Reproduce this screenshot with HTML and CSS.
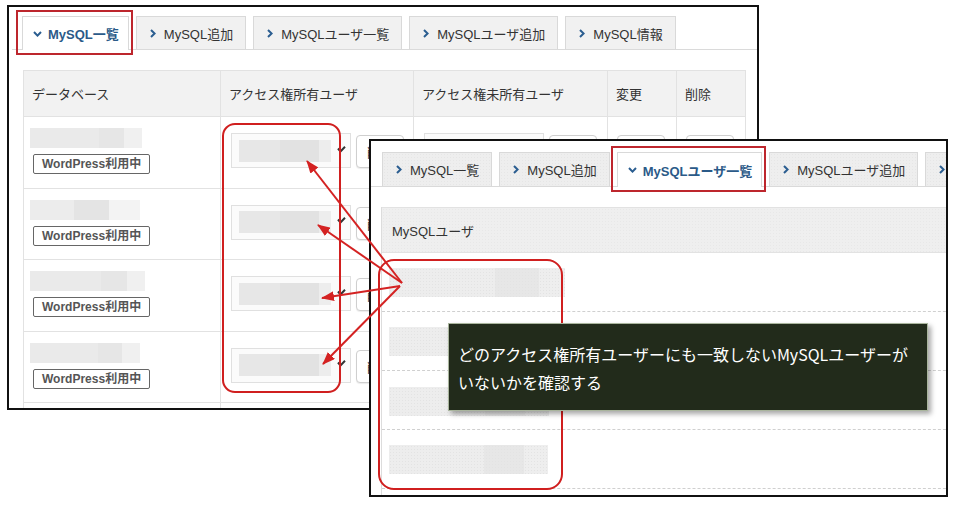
FILE: index.html
```html
<!DOCTYPE html>
<html lang="ja">
<head>
<meta charset="utf-8">
<title>MySQL一覧</title>
<link rel="stylesheet" href="styles.css">
</head>
<body>
<div class="stage">

  <section class="win win-main">
    <nav class="tabs">
      <div class="tab is-active is-marked"><svg class="chev-down" viewBox="0 0 9 6"><polyline points="1,1 4.5,4.6 8,1"/></svg><span>MySQL一覧</span></div>
      <div class="tab"><svg class="chev" viewBox="0 0 6 9"><polyline points="1,1 4.6,4.5 1,8"/></svg><span>MySQL追加</span></div>
      <div class="tab"><svg class="chev" viewBox="0 0 6 9"><polyline points="1,1 4.6,4.5 1,8"/></svg><span>MySQLユーザ一覧</span></div>
      <div class="tab"><svg class="chev" viewBox="0 0 6 9"><polyline points="1,1 4.6,4.5 1,8"/></svg><span>MySQLユーザ追加</span></div>
      <div class="tab"><svg class="chev" viewBox="0 0 6 9"><polyline points="1,1 4.6,4.5 1,8"/></svg><span>MySQL情報</span></div>
    </nav>

    <div class="dbtable">
      <div class="dbrow dbhead">
        <div class="cell">データベース</div>
        <div class="cell">アクセス権所有ユーザ</div>
        <div class="cell">アクセス権未所有ユーザ</div>
        <div class="cell">変更</div>
        <div class="cell">削除</div>
      </div>

      <div class="dbrow">
        <div class="cell c-db"><div class="blur w112"></div><span class="badge">WordPress利用中</span></div>
        <div class="cell c-own"><div class="select"><div class="blur-in"></div><svg class="sel-chev" viewBox="0 0 9 7"><polyline points="1,2.5 3.5,5.5 8,0.8"/></svg></div><span class="btn">削除</span></div>
        <div class="cell c-own"><div class="select plain"></div><span class="btn"></span></div>
        <div class="cell c-btn"><span class="btn"></span></div>
        <div class="cell c-btn"><span class="btn"></span></div>
      </div>

      <div class="dbrow">
        <div class="cell c-db"><div class="blur w110 s1"></div><span class="badge">WordPress利用中</span></div>
        <div class="cell c-own"><div class="select"><div class="blur-in"></div><svg class="sel-chev" viewBox="0 0 9 7"><polyline points="1,2.5 3.5,5.5 8,0.8"/></svg></div><span class="btn">削除</span></div>
        <div class="cell"></div>
        <div class="cell"></div>
        <div class="cell"></div>
      </div>

      <div class="dbrow">
        <div class="cell c-db"><div class="blur w115"></div><span class="badge">WordPress利用中</span></div>
        <div class="cell c-own"><div class="select"><div class="blur-in"></div><svg class="sel-chev" viewBox="0 0 9 7"><polyline points="1,2.5 3.5,5.5 8,0.8"/></svg></div><span class="btn">削除</span></div>
        <div class="cell"></div>
        <div class="cell"></div>
        <div class="cell"></div>
      </div>

      <div class="dbrow">
        <div class="cell c-db"><div class="blur w110"></div><span class="badge">WordPress利用中</span></div>
        <div class="cell c-own"><div class="select"><div class="blur-in"></div><svg class="sel-chev" viewBox="0 0 9 7"><polyline points="1,2.5 3.5,5.5 8,0.8"/></svg></div><span class="btn">削除</span></div>
        <div class="cell"></div>
        <div class="cell"></div>
        <div class="cell"></div>
      </div>

      <div class="dbrow">
        <div class="cell"></div><div class="cell"></div><div class="cell"></div><div class="cell"></div><div class="cell"></div>
      </div>
    </div>
  </section>

  <div class="mark mark-owners"></div>

  <section class="win win-users">
    <nav class="tabs">
      <div class="tab tex"><svg class="chev" viewBox="0 0 6 9"><polyline points="1,1 4.6,4.5 1,8"/></svg><span>MySQL一覧</span></div>
      <div class="tab tex"><svg class="chev" viewBox="0 0 6 9"><polyline points="1,1 4.6,4.5 1,8"/></svg><span>MySQL追加</span></div>
      <div class="tab is-active is-marked"><svg class="chev-down" viewBox="0 0 9 6"><polyline points="1,1 4.5,4.6 8,1"/></svg><span>MySQLユーザ一覧</span></div>
      <div class="tab tex"><svg class="chev" viewBox="0 0 6 9"><polyline points="1,1 4.6,4.5 1,8"/></svg><span>MySQLユーザ追加</span></div>
      <div class="tab tex"><svg class="chev" viewBox="0 0 6 9"><polyline points="1,1 4.6,4.5 1,8"/></svg><span>MySQL情報</span></div>
    </nav>

    <div class="usertable">
      <div class="userhead">MySQLユーザ</div>
      <div class="userrow"><div class="ublur u176"></div></div>
      <div class="userrow"><div class="ublur u160"></div></div>
      <div class="userrow r3"><div class="ublur u160"></div></div>
      <div class="userrow"><div class="ublur u159"></div></div>
      <div class="userrow"></div>
    </div>
  </section>

  <div class="mark mark-users"></div>

  <svg class="arrows" viewBox="0 0 957 507">
    <defs>
      <marker id="head" markerUnits="userSpaceOnUse" markerWidth="13" markerHeight="10" refX="12" refY="5" orient="auto">
        <path d="M0,0 L13,5 L0,10 Z" fill="#d42222"/>
      </marker>
    </defs>
    <line x1="402" y1="283" x2="307" y2="161" marker-end="url(#head)"/>
    <line x1="402" y1="283" x2="318" y2="225" marker-end="url(#head)"/>
    <line x1="400" y1="286" x2="322" y2="298" marker-end="url(#head)"/>
    <line x1="400" y1="286" x2="323" y2="364" marker-end="url(#head)"/>
  </svg>

  <div class="tooltip">
    <p>どのアクセス権所有ユーザーにも一致しないMySQLユーザーが</p>
    <p>いないかを確認する</p>
  </div>

</div>
</body>
</html>
```

FILE: styles.css
```css
* { box-sizing: border-box; }

body {
  margin: 0;
  background: #fff;
  font-family: "Liberation Sans", "Noto Sans CJK JP", sans-serif;
  color: #333;
}

.stage {
  position: relative;
  width: 957px;
  height: 507px;
  overflow: hidden;
  background: #fff;
}

/* windows */
.win {
  position: absolute;
  background: #fff;
  border: 2px solid #111;
  overflow: hidden;
}
.win-main { left: 7px; top: 5px; width: 752px; height: 405px; }
.win-users { left: 369px; top: 139px; width: 579px; height: 358px; }

/* tabs */
.tabs {
  display: flex;
  align-items: flex-end;
  gap: 7px;
  border-bottom: 1px solid #dadada;
}
.win-main .tabs { margin: 9px 0 0 3px; padding-left: 10px; height: 34px; }
.win-users .tabs { margin-top: 11px; padding-left: 11px; height: 35px; }

.tab {
  position: relative;
  flex: none;
  display: flex;
  align-items: center;
  gap: 8px;
  padding: 0 12px 0 13px;
  border: 1px solid #d9d9d9;
  border-bottom: 0;
  background: #f1f1f1;
  font-size: 13px;
  color: #333;
  white-space: nowrap;
}
.win-main .tab { height: 33px; }
.win-users .tab { height: 34px; }
.tab.tex {
  background-color: #eeeeee;
  background-image: radial-gradient(#e6e6e6 0.6px, transparent 0.8px);
  background-size: 3px 3px;
}
.tab.is-active {
  background: #fff;
  color: #2b5a88;
  font-weight: bold;
  margin-bottom: -1px;
  gap: 6px;
  padding: 0 9px 0 10px;
}
.win-main .tab.is-active { height: 34px; }
.win-users .tab.is-active { height: 35px; }
.is-marked::after {
  content: "";
  position: absolute;
  left: -7px;
  right: -5px;
  top: -7px;
  bottom: -5px;
  border: 2px solid #bd262d;
}

.chev { width: 6px; height: 9px; }
.chev-down { width: 9px; height: 6px; }
.chev polyline, .chev-down polyline {
  fill: none;
  stroke: #2a5d90;
  stroke-width: 2;
}

/* database table */
.dbtable {
  margin: 20px 0 0 14px;
  width: 723px;
  border-left: 1px solid #e2e2e2;
  border-top: 1px solid #e2e2e2;
}
.dbrow {
  display: grid;
  grid-template-columns: 197px 193px 194px 69px 69px;
  height: 71.5px;
}
.dbhead { height: 46px; background: #f2f2f2; }
.cell {
  border-right: 1px solid #e2e2e2;
  border-bottom: 1px solid #e2e2e2;
  min-width: 0;
}
.dbhead .cell {
  display: flex;
  align-items: center;
  padding-left: 8px;
  font-size: 13px;
  color: #333;
}

.c-db {
  display: flex;
  flex-direction: column;
  align-items: flex-start;
  padding: 11px 0 0 6px;
}
.blur {
  height: 20px;
  background: linear-gradient(90deg, #eaeaea 0 62%, #e6e6e6 62% 84%, #f0f0f0 84%);
}
.blur.s1 { background: linear-gradient(90deg, #ececec 0 40%, #e4e4e4 40% 72%, #f3f3f3 72%); }
.w110 { width: 110px; }
.w112 { width: 112px; }
.w115 { width: 115px; }

.badge {
  margin: 6px 0 0 3px;
  height: 20px;
  line-height: 18px;
  padding: 0 8px;
  border: 1px solid #666;
  border-radius: 2px;
  font-size: 12px;
  font-weight: bold;
  color: #555;
  white-space: nowrap;
}

.c-own {
  display: flex;
  align-items: flex-start;
  gap: 5px;
  padding: 16px 0 0 10px;
}
.select {
  flex: none;
  width: 120px;
  height: 35px;
  border: 1px solid #e0e0e0;
  background: #fbfbfb;
  display: flex;
  align-items: center;
  gap: 6px;
  padding: 0 4px 0 7px;
}
.blur-in {
  width: 92px;
  height: 22px;
  background: linear-gradient(90deg, #e7e7e7 0 45%, #e2e2e2 45% 87%, #ededed 87%);
}
.sel-chev { width: 9px; height: 7px; margin-top: -3px; }
.sel-chev polyline { fill: none; stroke: #333; stroke-width: 2; }

.btn {
  flex: none;
  margin-top: 2px;
  height: 33px;
  width: 48px;
  padding-left: 10px;
  display: flex;
  align-items: center;
  border: 1px solid #cfcfcf;
  border-radius: 4px;
  background: #fff;
  font-size: 13px;
  color: #333;
  white-space: nowrap;
  overflow: hidden;
  box-shadow: 0 1px 1px rgba(0, 0, 0, 0.08);
}
.c-btn { padding: 16px 0 0 9px; }

/* users table */
.usertable {
  margin: 20px 0 0 10px;
  width: 620px;
  border-left: 1px solid #dcdcdc;
}
.userhead {
  height: 46px;
  display: flex;
  align-items: center;
  padding-left: 10px;
  border-top: 1px solid #e2e2e2;
  border-bottom: 1px solid #e2e2e2;
  background-color: #efefef;
  background-image: radial-gradient(#e8e8e8 0.6px, transparent 0.8px);
  background-size: 3px 3px;
  font-size: 13px;
  color: #333;
}
.userrow {
  height: 59px;
  padding: 15px 0 0 7px;
  border-bottom: 1px dashed #d0d0d0;
}
.userrow.r3 { padding-top: 16px; }
.ublur {
  height: 29px;
  background-color: #ebebeb;
  background-image: radial-gradient(#e3e3e3 0.6px, transparent 0.8px), linear-gradient(90deg, #ededed 0 60%, #e7e7e7 60% 85%, #eeeeee 85%);
  background-size: 3px 3px, 100% 100%;
}
.u176 { width: 176px; }
.u160 { width: 160px; }
.u159 { width: 159px; }

/* annotations */
.mark {
  position: absolute;
  border: 2px solid #d01f1f;
}
.mark-owners { left: 222px; top: 123px; width: 119px; height: 270px; border-radius: 13px; }
.mark-users { left: 378px; top: 259px; width: 185px; height: 231px; border-radius: 16px; }

.arrows {
  position: absolute;
  left: 0;
  top: 0;
  width: 957px;
  height: 507px;
  pointer-events: none;
}
.arrows line { stroke: #d42222; stroke-width: 2; }

.tooltip {
  position: absolute;
  left: 448px;
  top: 323px;
  width: 480px;
  height: 88px;
  padding: 16px 0 0 9px;
  background: #222b1b;
  border: 1px solid #a9b59d;
  box-shadow: 3px 3px 5px rgba(0, 0, 0, 0.35);
  color: #fff;
  font-family: "Noto Sans CJK JP", sans-serif;
  font-size: 16px;
  line-height: 28px;
}
.tooltip p { margin: 0; white-space: nowrap; }
```
